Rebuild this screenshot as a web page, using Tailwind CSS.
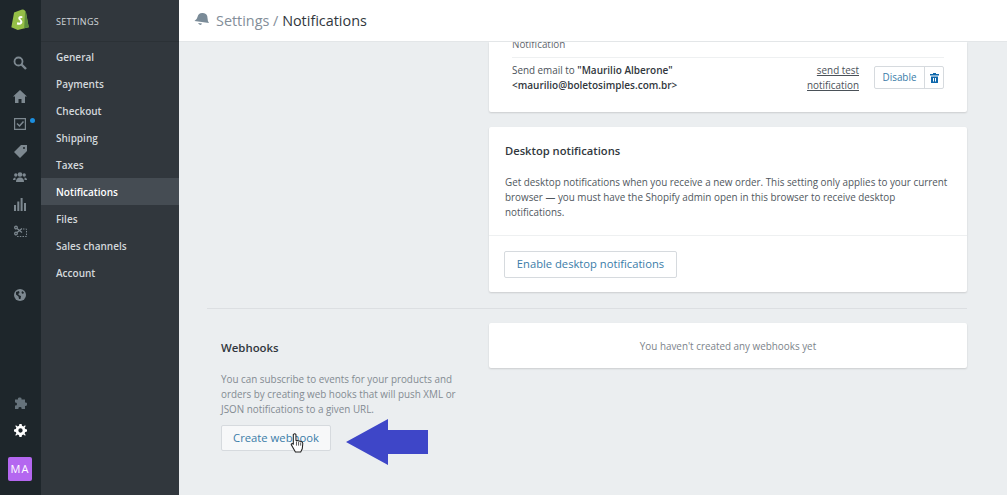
<!DOCTYPE html>
<html lang="en">
<head>
  <meta charset="UTF-8" />
  <title>Settings / Notifications</title>
  <script src="https://cdn.jsdelivr.net/npm/@tailwindcss/browser@4"></script>
</head>
<body class="bg-[#ebeef0] font-['Open_Sans',sans-serif] overflow-hidden">
  <div class="flex h-[495px] w-[1007px] overflow-hidden relative">

    <!-- icon rail -->
    <nav class="w-[41px] shrink-0 bg-[#1e262b] flex flex-col items-center pr-[1px] text-[#7d8890]">
      <svg class="w-[19px] h-[22px] mt-[8px]" viewBox="0 0 20 24">
        <path d="M3 5 L11 2 Q13 1 15 3 L16 5 L19 21 L7 24 L0 21 Z" fill="#95bf47"/>
        <path d="M15 3 L16 5 L19 21 L14 22 Z" fill="#5e8e3e"/>
        <path d="M12 9 Q8 8 7.500 11 Q7.500 12.500 9.500 14 Q10.500 15.500 9 16 Q8 16 6.500 15.500 L6 18 Q10 19 11.500 17 Q13 14.500 10.500 12.500 Q9.500 11.500 10 11 Q11 10.700 12 11 Z" fill="#fff"/>
      </svg>
      <svg class="w-[14px] h-[14px] mt-[26px]" viewBox="0 0 14 14" fill="none" stroke="currentColor" stroke-width="1.800">
        <circle cx="5.500" cy="5.500" r="4"/><path d="M8.500 8.500 L13 13" stroke-width="2.400"/>
      </svg>
      <svg class="w-[14px] h-[13px] mt-[20px]" viewBox="0 0 14 13" fill="currentColor">
        <path d="M7 0 L14 6.500 L12 6.500 L12 13 L8.500 13 L8.500 9 L5.500 9 L5.500 13 L2 13 L2 6.500 L0 6.500 Z"/>
      </svg>
      <div class="relative mt-[15px] h-[12px]">
        <svg class="w-[12px] h-[12px]" viewBox="0 0 12 12" fill="none" stroke="currentColor">
          <path d="M0.500 0.500 H11.500 V11.500 H0.500 Z" stroke-width="1.400"/><path d="M3 5.500 L5.500 8 L9.500 3.500" stroke-width="1.500"/>
        </svg>
        <span class="absolute left-[16px] top-[0px] w-[5px] h-[5px] rounded-full bg-[#1c8fe0]"></span>
      </div>
      <svg class="w-[13px] h-[13px] mt-[15px]" viewBox="0 0 13 13" fill="currentColor">
        <path d="M7 0 H13 V6 L6 13 L0 7 Z M10 2 A1 1 0 1 0 10 4 A1 1 0 1 0 10 2 Z" fill-rule="evenodd"/>
      </svg>
      <svg class="w-[14px] h-[10px] mt-[14px]" viewBox="0 0 14 10" fill="currentColor">
        <circle cx="7" cy="2.500" r="2.300"/><circle cx="2.800" cy="3" r="1.700"/><circle cx="11.200" cy="3" r="1.700"/>
        <path d="M3 10 Q3 5.500 7 5.500 Q11 5.500 11 10 Z"/><path d="M0 8 Q0 5.500 2.500 5.500 L2.500 8 Z M14 8 Q14 5.500 11.500 5.500 L11.500 8 Z"/>
      </svg>
      <svg class="w-[12px] h-[13px] mt-[16px]" viewBox="0 0 12 13" fill="currentColor">
        <rect x="0" y="7" width="2" height="6"/><rect x="3.300" y="3.500" width="2" height="9.500"/><rect x="6.600" y="0" width="2" height="13"/><rect x="10" y="5" width="2" height="8"/>
      </svg>
      <svg class="w-[13px] h-[13px] mt-[14px]" viewBox="0 0 13 13" fill="none" stroke="currentColor" stroke-width="1.300">
        <circle cx="2" cy="2.500" r="1.300"/><circle cx="2" cy="8.500" r="1.300"/><path d="M3 3.500 L8 7.500 M3 7.500 L8 3.500"/><path d="M9 4 H12.500 V11.500 H3" stroke-dasharray="1.500 1.200" stroke-width="1"/>
      </svg>
      <svg class="w-[12px] h-[12px] mt-[51px]" viewBox="0 0 12 12">
        <circle cx="6" cy="6" r="6" fill="currentColor"/>
        <path d="M2 3 L5 2 L5.500 4 L4 5 L5.500 6.500 L7 7 L6.500 10 L5 10 L4.500 7.500 L2 5.500 Z M8 2 L10 3.500 L9 5 L7.500 4 Z" fill="#1e262b"/>
      </svg>
      <svg class="w-[13px] h-[13px] mt-[96px]" viewBox="0 0 13 13" fill="#66727b">
        <path d="M5 0.500 Q8 0 7.500 2.500 L11 2.500 L11 5.500 Q13.500 5 13 7.500 Q13 9.500 11 8.800 L11 12 L7.500 12 Q8 10 6 10 Q4 10 4.500 12 L1 12 L1 8.500 Q3 9 3 7 Q3 5 1 5.500 L1 2.500 L4 2.500 Q3.500 0.800 5 0.500 Z"/>
      </svg>
      <svg class="w-[13px] h-[13px] mt-[14px]" viewBox="0 0 24 24" fill="#fff">
        <path fill-rule="evenodd" d="M10 0 H14 L14.700 3.300 L17.300 4.400 L20.500 2.500 L21.500 3.500 L19.600 6.700 L20.700 9.300 L24 10 V14 L20.700 14.700 L19.600 17.300 L21.500 20.500 L20.500 21.500 L17.300 19.600 L14.700 20.700 L14 24 H10 L9.300 20.700 L6.700 19.600 L3.500 21.500 L2.500 20.500 L4.400 17.300 L3.300 14.700 L0 14 V10 L3.300 9.300 L4.400 6.700 L2.500 3.500 L3.500 2.500 L6.700 4.400 L9.300 3.300 Z M12 8 A4 4 0 1 0 12 16 A4 4 0 1 0 12 8 Z"/>
      </svg>
      <div class="mt-[20px] w-[24px] h-[24px] rounded-[2px] bg-[#b467f0] text-white text-[11px] flex items-center justify-center tracking-[1px]">MA</div>
    </nav>

    <!-- settings menu -->
    <aside class="w-[138px] shrink-0 bg-[#31373d] text-[#d3d8dc] text-[10px] font-semibold">
      <div class="h-[42px] border-b border-[#2b3136] pl-[15px] pt-[15px] text-[9px] tracking-[0.3px] font-normal">SETTINGS</div>
      <ul class="pt-[1px]">
        <li class="h-[27px] pl-[15px] leading-[29px]">General</li>
        <li class="h-[27px] pl-[15px] leading-[29px]">Payments</li>
        <li class="h-[27px] pl-[15px] leading-[29px]">Checkout</li>
        <li class="h-[27px] pl-[15px] leading-[29px]">Shipping</li>
        <li class="h-[27px] pl-[15px] leading-[29px]">Taxes</li>
        <li class="h-[27px] pl-[15px] leading-[29px] bg-[#454c53] text-white">Notifications</li>
        <li class="h-[27px] pl-[15px] leading-[29px]">Files</li>
        <li class="h-[27px] pl-[15px] leading-[29px]">Sales channels</li>
        <li class="h-[27px] pl-[15px] leading-[29px]">Account</li>
      </ul>
    </aside>

    <!-- main -->
    <div class="flex-1 min-w-0 flex flex-col">
      <header class="h-[42px] bg-white border-b border-[#e3e6e8] flex items-center pl-[15px] text-[14.4px] shrink-0 relative z-10">
        <svg class="w-[15px] h-[15px] mr-[7px] mb-[3px]" viewBox="0 0 15 15" fill="#7a8b98">
          <path d="M0.500 9 Q3 7.500 3.500 5 Q4.500 0.500 9 1 Q13.500 1.500 13.500 6 Q13.500 9 15 11 Z"/><path d="M4 11 Q5 13 7 13 L8 11.500 Z"/>
        </svg>
        <span class="text-[#838e99]">Settings /&nbsp;</span><span class="text-[#31373d]">Notifications</span>
      </header>

      <main class="flex-1 overflow-hidden pr-[40px] pl-[28px] text-[9.87px] text-[#4a5158]">
        <div class="flex pl-[282px]">
          <section class="w-[478px] h-[70px] bg-white rounded-b-[2px] shadow-[0_1px_2px_rgba(0,0,0,0.14)] px-[23px]">
            <p class="h-[15px] leading-[4px] text-[#5f676e]">Notification</p>
            <div class="flex items-center border-t border-[#eef0f1] h-[40px]">
              <p class="flex-1 leading-[15px]">Send email to <b class="font-semibold text-[10px] text-[#31373d]">"Maurilio Alberone"</b><br><b class="font-semibold text-[10px] text-[#31373d]">&lt;maurilio@boletosimples.com.br&gt;</b></p>
              <a class="underline text-right leading-[15px] w-[70px] mr-[15px] text-[#4a5158]">send test notification</a>
              <div class="flex h-[23px] w-[70px] border border-[#d6dade] rounded-[2px] text-[#3a7ca8]">
                <span class="flex-1 flex items-center justify-center">Disable</span>
                <span class="w-[19px] border-l border-[#d6dade] flex items-center justify-center">
                  <svg class="w-[9px] h-[10px]" viewBox="0 0 9 10" fill="#0f68ac"><path fill-rule="evenodd" d="M3 0 H6 V1 H9 V2.500 H0 V1 H3 Z M1 3.500 H8 V10 H1 Z M3 5 V8.500 H4 V5 Z M5 5 V8.500 H6 V5 Z"/></svg>
                </span>
              </div>
            </div>
          </section>
        </div>

        <div class="flex pl-[282px] mt-[15px]">
          <section class="w-[478px] h-[165px] bg-white rounded-[2px] shadow-[0_1px_2px_rgba(0,0,0,0.14)]">
            <div class="h-[109px] pl-[16px] pr-[12px] border-b border-[#eef0f1]">
              <h2 class="pt-[15px] text-[11.2px] leading-[18px] font-semibold text-[#31373d]">Desktop notifications</h2>
              <p class="mt-[15px] leading-[15px] text-[#50575e]">Get desktop notifications when you receive a new order. This setting only applies to your current browser — you must have the Shopify admin open in this browser to receive desktop notifications.</p>
            </div>
            <div class="px-[15px] pt-[15px]">
              <button class="h-[27px] w-[173px] bg-white border border-[#d6dade] rounded-[2px] text-[11.2px] text-[#3a7ca8]">Enable desktop notifications</button>
            </div>
          </section>
        </div>

        <div class="border-t border-[#dcdfe2] mt-[16px] pt-[14px] flex">
          <div class="w-[282px] pl-[14px]">
            <h2 class="pt-[16px] text-[11.4px] leading-[18px] font-semibold text-[#31373d]">Webhooks</h2>
            <p class="mt-[15px] w-[245px] leading-[15px] text-[#838b92]">You can subscribe to events for your products and orders by creating web hooks that will push XML or JSON notifications to a given URL.</p>
            <button class="mt-[8px] h-[26px] w-[110px] bg-[#f7f8f9] border border-[#d6dade] rounded-[2px] text-[11.25px] text-[#3a7ca8]">Create webhook</button>
          </div>
          <section class="w-[478px] h-[45px] bg-white rounded-[2px] shadow-[0_1px_2px_rgba(0,0,0,0.14)] flex items-center justify-center pt-[1px] text-[#7b838a]">You haven't created any webhooks yet</section>
        </div>
      </main>
    </div>

    <!-- annotation arrow over the page -->
    <svg class="absolute left-[346px] top-[419px] w-[82px] h-[46px]" viewBox="0 0 82 46">
      <path d="M0 23 L42 0 V11 H82 V35 H42 V46 Z" fill="#3e46c8"/>
    </svg>
    <!-- mouse cursor -->
    <svg class="absolute left-[290px] top-[433px] w-[14px] h-[20px]" viewBox="0 0 13 19">
      <path d="M3 1.500 Q4.500 0 5.500 1.500 L5.500 7 L10.500 8 Q12 8.500 12 10 L11.500 15 L10 18 L5 18 L1 11 Q1 9.500 3 10.500 Z" fill="#fff" stroke="#222" stroke-width="1"/>
      <path d="M6 8 V12 M8 8.500 V12 M10 9 V12" stroke="#222" stroke-width="0.700"/>
    </svg>
  </div>
</body>
</html>
